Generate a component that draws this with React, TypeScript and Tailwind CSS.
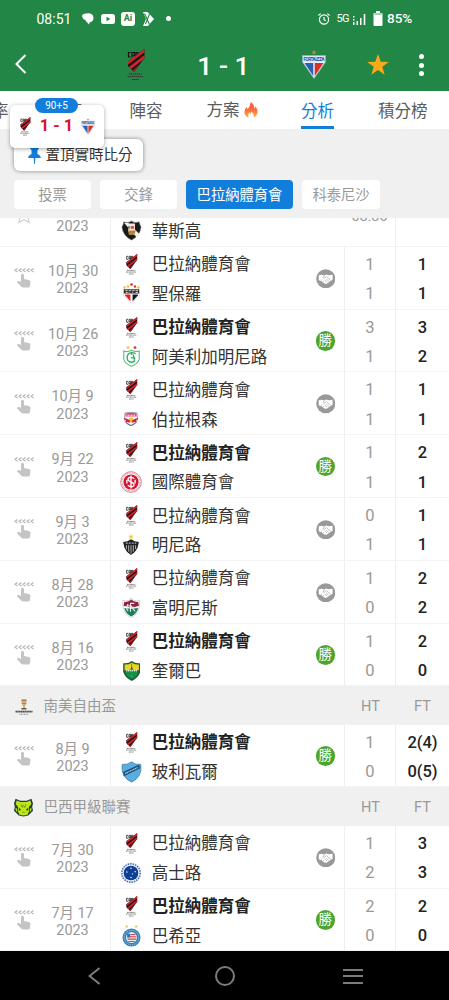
import type { ReactNode } from 'react';

type Result = 'win' | 'draw';

type Match = {
  day: string;
  opponent: string;
  crest: ReactNode;
  result: Result;
  ht: [string, string];
  ft: [string, string];
};

const CAP_NAME = '巴拉納體育會';

/* Crests */

function CapCrest({ className = '' }: { className?: string }) {
  return (
    <svg viewBox="0 0 36 64" className={className}>
      <path d="M8 7H4v9h4M11 17V7h5v10M11 13h5M19 17V7h4v5h-4" fill="none" stroke="#161616" strokeWidth="2.400" />
      <path d="M36 0v18L15 46 3 34v-9z" fill="#191616" />
      <path d="M36 0v6.500L3 31v-6z" fill="#d3222b" />
      <path d="M36 12v5.500l-3 4L9 40l-4-4z" fill="#d3222b" />
      <path d="M26 31l-4 6-7 9-3-3z" fill="#a81a22" />
      <path d="M5 50h25M2 55h31M11 61h14" stroke="#333" strokeWidth="2" strokeDasharray="3 1" />
    </svg>
  );
}

function FortalezaCrest({ className = '' }: { className?: string }) {
  return (
    <svg viewBox="0 0 48 58" className={className}>
      <path d="M24 0l1.300 3 3.200.3-2.400 2 .8 3.200-2.900-1.700-2.900 1.700.8-3.200-2.400-2 3.200-.3z" fill="#d48a35" />
      <path d="M1 11h46v13L24 57 1 24z" fill="#e9edf4" stroke="#8fabd2" strokeWidth="1.500" />
      <path d="M5 26h17.500v26z" fill="#2763b0" />
      <path d="M43 26H25.500v26z" fill="#d83027" />
      <rect x="2" y="12" width="44" height="12" fill="#dce7f4" />
      <text x="24" y="21.500" textAnchor="middle" fontSize="9" fontWeight="700" textLength="42" fill="#1f4f9c" fontFamily="Roboto, sans-serif">
        FORTALEZA
      </text>
    </svg>
  );
}

function VascoCrest() {
  return (
    <svg viewBox="0 0 24 24" className="h-[23px] w-[21px]">
      <path d="M3 2q5 2 9-1 4 3 9 1 0 3 2 6-1 10-11 15Q2 18 1 8q2-3 2-6z" fill="#1a1a1a" stroke="#999" strokeWidth=".6" />
      <path d="M3.500 3l5 .3L21 16l-3 4z" fill="#f1f1f1" />
      <path d="M9 4h7v9l-3 3-5-3z" fill="#ece7df" />
      <path d="M11 7h4v3h-4z" fill="#d1553c" />
      <path d="M8 12l9 0-2 5H9z" fill="#b4843f" />
      <path d="M13 4l1-2 1 2zM8 7h2v3H8z" fill="#777" />
    </svg>
  );
}

function SaoPauloCrest() {
  return (
    <svg viewBox="0 0 24 30" className="h-[21px] w-[17px]">
      <circle cx="2" cy="6.500" r="1.700" fill="#f2c230" />
      <circle cx="7" cy="5" r="1.700" fill="#f2c230" />
      <circle cx="12" cy="2.200" r="1.900" fill="#db2f35" />
      <circle cx="17" cy="5" r="1.700" fill="#db2f35" />
      <circle cx="22" cy="6.500" r="1.700" fill="#f2c230" />
      <path d="M1 9h22v9L12 29 1 18z" fill="#fff" stroke="#bbb" strokeWidth=".8" />
      <rect x="1" y="9" width="22" height="6" fill="#333" />
      <path d="M3 11h3.500M8 11h3.500M13 11h3.500M18 11h3.500M4 13.500h2.500M8 13.500h1M13 13.500h1M18 13.500h3" stroke="#eee" strokeWidth="1.200" />
      <path d="M3 16.500h7.500V26L3 18z" fill="#e01f26" />
      <path d="M21 16.500h-7.500V26l7.500-8z" fill="#151515" />
    </svg>
  );
}

function AmericaCrest() {
  return (
    <svg viewBox="0 0 24 30" className="h-[21px] w-[17px]">
      <circle cx="7" cy="2.200" r="2" fill="#f0cf32" />
      <circle cx="17" cy="2.200" r="2" fill="#df363a" />
      <path d="M1 7q5 2 11-1 6 3 11 1v12q-2 6-11 10Q3 25 1 19z" fill="#fff" stroke="#4fbb7a" strokeWidth="1.500" />
      <path d="M18 11q-6-3-10 0-4 4-1 10 4 4 9 1v-5h-5M12 9v4M14 12l3 7" fill="none" stroke="#2fae62" strokeWidth="1.900" />
    </svg>
  );
}

function BragantinoCrest() {
  return (
    <svg viewBox="0 0 30 28" className="h-[14px] w-[16px]">
      <path d="M3 2q12-3 24 0l1 14q-4 9-13 12Q6 25 2 16z" fill="#fff" stroke="#8490aa" strokeWidth="1.800" />
      <path d="M4 3q11-3 22 0v6H4z" fill="#df4c70" />
      <path d="M6 6.500h18" stroke="#fff" strokeWidth="2" strokeDasharray="2 1" />
      <circle cx="15" cy="16" r="5" fill="#f5bf25" />
      <path d="M0 12l6 1 7 4-1 5-4-2-4 2 1-5zM30 12l-6 1-7 4 1 5 4-2 4 2-1-5z" fill="#d7213a" />
      <path d="M6 22l9 5 9-5" fill="none" stroke="#56658a" strokeWidth="2" />
    </svg>
  );
}

function InternacionalCrest() {
  return (
    <svg viewBox="0 0 24 24" className="h-[22px] w-[22px]">
      <circle cx="12" cy="12" r="11.300" fill="#fff" stroke="#d35b68" strokeWidth=".8" />
      <circle cx="12" cy="12" r="9.800" fill="none" stroke="#d97c86" strokeWidth="1.100" strokeDasharray="1 .8" />
      <circle cx="12" cy="12" r="8.300" fill="#d31631" />
      <path d="M15.500 8.500Q12 5.500 9 8q-1 2.500 3 4t3 4q-3 2.500-6.500-.5M12 5v14M7.500 9.500v4M16.500 9.500v4" fill="none" stroke="#fff" strokeWidth="1.500" />
    </svg>
  );
}

function AtleticoCrest() {
  return (
    <svg viewBox="0 0 24 32" className="h-[21px] w-[16px]">
      <path d="M12 0l1 2.500h3l-2 2 .6 3-2.600-1.500-2.600 1.500.6-3-2-2h3z" fill="#efd22c" />
      <path d="M0 12q7 0 12-4 5 4 12 4l-2 9q-3 7-10 11Q5 28 2 21z" fill="#202020" />
      <path d="M5 17v6M8.500 17v10M12 17v13M15.500 17v10M19 17v6" stroke="#ddd" strokeWidth="1.200" />
      <path d="M4 14h16" stroke="#aaa" strokeWidth="2" strokeDasharray="3 1.500" />
    </svg>
  );
}

function FluminenseCrest() {
  return (
    <svg viewBox="0 0 24 26" className="h-[20px] w-[18.500px]">
      <path d="M1 3q4 2 8 0l3-3 3 3q4 2 8 0 1 17-11 23Q0 20 1 3z" fill="#fff" stroke="#a9aaa8" strokeWidth=".7" />
      <path d="M3 5q5 1 9-3 4 4 9 3l1 5-9 3-11-3z" fill="#8d2442" />
      <path d="M3 13l9 1 9-1q-2 8-9 11-7-3-9-11z" fill="#178059" />
      <path d="M16 7h-5v11M11 12h5M8 8q-4 5 0 9M6 10.500h6l5 7" fill="none" stroke="#eee" strokeWidth="1.400" />
    </svg>
  );
}

function CuiabaCrest() {
  return (
    <svg viewBox="0 0 24 28" className="h-[20px] w-[17.500px]">
      <path d="M12 0q5 4 12 3v12q-2 8-12 13Q2 23 0 15V3q7 1 12-3z" fill="#1e5b35" />
      <path d="M12 2.500q5 3 10 2.500v8H2V5q5 .5 10-2.500z" fill="#f0d31b" />
      <path d="M11.500 4h1v4l2 5h-5l2-5z" fill="#227844" />
      <path d="M2.500 15h19q-2 7-9.500 10.500Q4.500 22 2.500 15z" fill="#128f48" />
      <path d="M4 13.500h16" stroke="#d9e6cd" strokeWidth="2.200" strokeDasharray="2 .7" />
      <circle cx="12" cy="21" r="1.800" fill="#38995d" />
    </svg>
  );
}

function BolivarCrest() {
  return (
    <svg viewBox="0 0 24 26" className="h-[22px] w-[21px]">
      <path d="M1 4q6 1 11-3 5 4 11 3 2 15-11 21Q-1 19 1 4z" fill="#58aee1" stroke="#397faa" strokeWidth=".9" />
      <path d="M2 13L21 4l1 5L3 18z" fill="#1c527c" />
      <path d="M4.500 14.800L20 7.500" stroke="#a5cbe2" strokeWidth="1.600" strokeDasharray="1.500 .6" />
    </svg>
  );
}

function CruzeiroCrest() {
  return (
    <svg viewBox="0 0 24 24" className="h-[22px] w-[22px]">
      <circle cx="12" cy="12" r="11.500" fill="#e9eef7" />
      <circle cx="12" cy="12" r="10" fill="none" stroke="#4f72ae" strokeWidth="1.700" strokeDasharray="1.600 1.100" />
      <circle cx="12" cy="12" r="8" fill="#0e3f93" />
      <g fill="#fff">
        <circle cx="12" cy="6.700" r=".8" />
        <circle cx="7.500" cy="11" r=".8" />
        <circle cx="16.500" cy="10.500" r=".8" />
        <circle cx="13.500" cy="13" r=".6" />
        <circle cx="12" cy="17" r=".8" />
      </g>
    </svg>
  );
}

function BahiaCrest() {
  return (
    <svg viewBox="0 0 24 28" className="h-[22px] w-[19px]">
      <circle cx="6" cy="2" r="1.600" fill="#efcf56" />
      <circle cx="18" cy="2" r="1.600" fill="#efcf56" />
      <circle cx="12" cy="16" r="11.500" fill="#3780b8" />
      <circle cx="12" cy="16" r="9.300" fill="none" stroke="#a3cbe2" strokeWidth="1.200" strokeDasharray="1.500 1" />
      <circle cx="12" cy="16" r="7" fill="#e3edf3" />
      <path d="M11 12h6M10 15h8M7 18h11M8 21h8" stroke="#d44747" strokeWidth="1.400" />
      <path d="M6.500 11h4v5h-4z" fill="#396fa9" />
    </svg>
  );
}

function LibertadoresLogo() {
  return (
    <svg viewBox="0 0 36 32" className="h-[16px] w-[18px]">
      <path d="M13 0h10v9l-3 5v4h-4v-4l-3-5z" fill="#d1b07f" />
      <path d="M13 3h10M14 9h8" stroke="#98744a" strokeWidth="1.500" />
      <path d="M13 18h10v3H13z" fill="#60574c" />
      <path d="M1 25h34" stroke="#4a4743" strokeWidth="3.500" strokeDasharray="3 .6" />
      <path d="M9 30.500h18" stroke="#8c8780" strokeWidth="2" strokeDasharray="2 1" />
    </svg>
  );
}

function BrasileiraoLogo() {
  return (
    <svg viewBox="0 0 24 24" className="h-[19px] w-[19px]">
      <path d="M2 1l6 2.500h8L22 1l2 6-1 4 1 5-6 6-6 1.500L6 22l-6-6 1-5-1-4z" fill="#20403a" />
      <path d="M3.500 3L8 5h8l4.500-2L22 7.500l-3 3.500 0 6-2 4-5 1-5-1-2-4V11L2 7.500z" fill="#bfe51a" />
      <path d="M2 12l2 2v4l-2-3zM22 12l-2 2v4l2-3z" fill="#bfe51a" />
      <path d="M6 12l3 3-3 1zM18 12l-3 3 3 1z" fill="#20403a" />
      <path d="M9 8l1.500 4L12 9l1.500 3L15 8M10.500 18h3" fill="none" stroke="#5f9c1c" strokeWidth="1.100" />
    </svg>
  );
}

/* Small icons */

function SwipeHint() {
  return (
    <svg viewBox="0 0 22 22" className="h-[22px] w-[22px]">
      <path
        d="M4.500 1.500L2 3.300l2.500 1.800M8.500 1.500L6 3.300l2.500 1.800M12.500 1.500L10 3.300l2.500 1.800M16.500 1.500L14 3.300l2.500 1.800M20.500 1.500L18 3.300l2.500 1.800"
        fill="none"
        stroke="#b5b5b5"
        strokeWidth="1.200"
      />
      <path
        d="M8 8.200q0-1.500 1.500-1.500T11 8.200v3.900l4.800.8q1.800.4 1.700 2.200l-.6 3.900q-.2 1.500-1.700 1.500H10q-1 0-1.600-.8L4 15.200q.4-1.500 2-1.100l2 1z"
        fill="#c4c4c4"
      />
    </svg>
  );
}

function ResultBadge({ result }: { result: Result }) {
  if (result === 'win') {
    return (
      <span className="mt-px flex h-[19.500px] w-[19.500px] items-center justify-center rounded-full bg-[#4ca52e] text-[13.500px] leading-none text-white">
        勝
      </span>
    );
  }
  return (
    <svg viewBox="0 0 20 20" className="mt-px h-[19.500px] w-[19.500px]">
      <circle cx="10" cy="10" r="9.800" fill="#999" />
      <path d="M2.800 6.500l3-.7 2.700.8 2-.9 2.500.6 4-.5v5.300l-2.500 1.400-3.500 2.600-2 .1-3.500-2.600-2.700-1z" fill="#fff" />
      <path d="M8.500 6.700L7.200 9l1.500.4 2-1.600 4.300 3.800M10.500 10.200l2.700 2.300M9 11.400l2.500 2M5 12l1.500-1.300M7 13.500l1.300-1.400" fill="none" stroke="#999" strokeWidth=".6" />
    </svg>
  );
}

function Flame() {
  return (
    <svg viewBox="0 0 14 17" className="h-[16px] w-[14px]">
      <path d="M6.500 0Q11 3 10.500 7q1-.8 1-2.200Q14 7 14 10.500 13.500 15 9.500 16.500q1.500-3-2-6.500-.3 2-1.300 2.500-.7-.7-.8-1.500-2.200 2.500-1 5.500Q0 15 0 10.500 0 7.500 2.500 5q0 1.500 1 2.500Q6.800 4 6.500 0z" fill="url(#flame)" />
      <defs>
        <linearGradient id="flame" x1="0" y1="0" x2="0" y2="1">
          <stop offset="0" stopColor="#f4513f" />
          <stop offset=".55" stopColor="#f9743f" />
          <stop offset="1" stopColor="#fbb244" />
        </linearGradient>
      </defs>
    </svg>
  );
}

/* Screen sections */

function StatusBar() {
  return (
    <div className="flex h-[37px] items-center pl-[36.500px] pr-[37px] text-white">
      <span className="w-[34px] whitespace-nowrap pt-px text-[14px] leading-none">08:51</span>
      <svg viewBox="0 0 12 12" className="ml-[11px] h-[12px] w-[12px]" fill="currentColor">
        <path d="M0 2.500Q1.500.3 6 .3 11.500.5 11.500 5q0 3.500-3.500 4.300L6.500 11.500 5.300 9.400Q3.500 8.500 3.500 7 .5 6.500 0 2.500z" />
      </svg>
      <svg viewBox="0 0 14 10" className="ml-[7px] h-[10px] w-[14px]">
        <rect width="14" height="10" rx="2.500" fill="#fff" />
        <path d="M5.500 2.700L9.300 5 5.500 7.300z" fill="#228646" />
      </svg>
      <span className="ml-[6.500px] flex h-[14px] w-[14px] items-center justify-center rounded-[3px] bg-white text-[9px] font-bold leading-none text-[#228646]">
        Ai
      </span>
      <svg viewBox="0 0 11 14" className="ml-[8px] h-[14px] w-[11px]">
        <path d="M0 0h4.500L7 2.500 11 7l-4 4.500L5 14H0l3-7z" fill="#fff" />
        <path d="M1.500 1.500l5 11M6.500 2L2.500 12" stroke="#228646" strokeWidth="1.100" />
      </svg>
      <span className="ml-[12px] h-[5px] w-[5px] rounded-full bg-white" />

      <svg viewBox="0 0 12 12" className="ml-auto h-[12px] w-[12px]" fill="none" stroke="#fff" strokeWidth="1.200">
        <circle cx="6" cy="6.500" r="4.600" />
        <path d="M6 4v2.700l1.800 1M.3 2.500L2.700.6M11.700 2.500L9.300.6" />
      </svg>
      <span className="ml-[6.500px] w-[13px] text-[11px] leading-none tracking-[-0.700px]">5G</span>
      <svg viewBox="0 0 14 12" className="ml-[2.500px] h-[12px] w-[14px]" fill="#fff">
        <path d="M1 3h1.500v1.500H1zM1 6h1.500v1.500H1zM1 9h1.500v3H1zM4.500 8H6v4H4.500zM8 5h1.500v7H8zM11.700 1h1.600v11h-1.600z" />
      </svg>
      <svg viewBox="0 0 10 15" className="ml-[7px] h-[15px] w-[10px]" fill="#fff">
        <path d="M3 0h4v2h1.500Q9.500 2 9.500 3v11q0 1-1 1h-7q-1 0-1-1V3q0-1 1-1H3z" />
        <path d="M1.500 3h7" stroke="#228646" strokeWidth=".8" />
      </svg>
      <span className="ml-[4px] w-[25px] whitespace-nowrap pt-px text-[13.500px] font-medium leading-none">85%</span>
    </div>
  );
}

function ScoreHeader() {
  return (
    <div className="flex h-[54px] items-center pl-[15px] pr-[24px] text-white">
      <svg viewBox="0 0 12 20" className="h-[20px] w-[12px]" fill="none" stroke="currentColor" strokeWidth="2">
        <path d="M10.500 1L1.500 10l9 9" />
      </svg>
      <CapCrest className="ml-[98.500px] mt-[2px] h-[32px] w-[19px]" />
      <span className="ml-[50px] mt-[4px] w-[58px] whitespace-nowrap text-center text-[26.500px] font-medium leading-none">
        1 - 1
      </span>
      <FortalezaCrest className="ml-[49.500px] h-[29px] w-[24px]" />
      <svg viewBox="0 0 22 22" className="ml-[41px] mt-[2px] h-[22px] w-[22px]" fill="#fba919">
        <path d="M11 0l2.700 7.700 8.100.2-6.500 4.900 2.400 7.900L11 16.100l-6.700 4.600 2.400-7.900L.2 7.900l8.100-.2z" />
      </svg>
      <span className="ml-auto mr-[1px] mt-[2px] flex flex-col gap-[3.500px]">
        <i className="h-[5px] w-[5px] rounded-full bg-white" />
        <i className="h-[5px] w-[5px] rounded-full bg-white" />
        <i className="h-[5px] w-[5px] rounded-full bg-white" />
      </span>
    </div>
  );
}

function TabBar() {
  return (
    <div className="h-[38px] overflow-hidden bg-white">
      <nav className="-ml-[24.500px] flex h-full gap-[44px] whitespace-nowrap text-[16.500px] leading-[41px] text-[#5c5c5c]">
        <span>賠率</span>
        <span className="w-[33px] text-[15px]">情報</span>
        <span>陣容</span>
        <span className="flex items-center gap-[4px]">
          方案 <Flame />
        </span>
        <span className="-ml-[0.500px] h-[38px] border-b-[3px] border-[#117edb] text-[#117edb]">分析</span>
        <span>積分榜</span>
      </nav>
    </div>
  );
}

function FilterChips() {
  return (
    <div className="flex h-[89px] items-end gap-[9px] bg-[#f0f0f0] pb-[9px] pl-[14px] text-[14.300px] leading-[31px] text-[#999]">
      <span className="h-[29px] w-[77px] rounded-[4px] bg-white text-center">投票</span>
      <span className="h-[29px] w-[77px] rounded-[4px] bg-white text-center">交鋒</span>
      <span className="h-[29px] w-[107px] rounded-[4px] bg-[#117edb] text-center text-white">{CAP_NAME}</span>
      <span className="h-[29px] w-[78px] rounded-[4px] bg-white text-center">科泰尼沙</span>
    </div>
  );
}

function FloatingScore() {
  return (
    <>
      <div className="absolute left-[14px] top-[138.500px] flex h-[32px] w-[129px] items-center rounded-[6px] bg-white pl-[13.500px] shadow-[0_0_4px_rgba(0,0,0,0.45)]">
        <svg viewBox="0 0 13 18" className="h-[18px] w-[13px]" fill="#117edb">
          <path d="M2 0h9v2.500L9.500 4v4q3 1 3.500 4H7.300L7 18h-.8l-.5-6H0q.5-3 3.500-4V4L2 2.500z" />
        </svg>
        <span className="ml-[5px] whitespace-nowrap pt-[3px] text-[14.500px] text-[#333]">置頂實時比分</span>
      </div>
      <div className="absolute left-[9.500px] top-[105px] flex h-[43px] w-[94px] items-center justify-between rounded-[5px] bg-white px-[7px] shadow-[0_1px_4px_rgba(0,0,0,0.35)]">
        <CapCrest className="ml-[2px] h-[19px] w-[12px]" />
        <span className="-mr-[1px] whitespace-nowrap text-[16.500px] font-bold leading-none text-[#d8122f]">1 - 1</span>
        <FortalezaCrest className="mr-px h-[17px] w-[14px]" />
      </div>
      <span className="absolute left-[35px] top-[97.500px] h-[15px] w-[43px] rounded-full bg-[#117edb] text-center text-[10px] leading-[15px] text-white">
        90+5
      </span>
    </>
  );
}

function MatchRow({ match }: { match: Match }) {
  const won = match.result === 'win';
  return (
    <div className="grid h-[62.800px] grid-cols-[48px_63px_234px_51px_53px] border-b border-[#f3f3f3]">
      <div className="flex items-center justify-center pb-[1px] pt-[2px]">
        <SwipeHint />
      </div>
      <div className="flex flex-col justify-center border-r border-[#eeeeee] pr-[13px] pt-[5px] text-center text-[14.400px] leading-[17.500px] text-[#999]">
        <span className="whitespace-nowrap">{match.day}</span>
        <span>2023</span>
      </div>
      <div className="flex items-center border-r border-[#eeeeee] pr-[9px]">
        <div className="flex flex-1 flex-col pt-[2.500px]">
          <div className="flex h-[29.500px] items-center">
            <span className="flex w-[40.800px] justify-center">
              <CapCrest className="h-[21px] w-[12.500px]" />
            </span>
            <span className={won ? 'pt-[3px] text-[16.500px] font-bold text-[#222]' : 'pt-[3px] text-[16.500px] text-[#333]'}>
              {CAP_NAME}
            </span>
          </div>
          <div className="flex h-[29.500px] items-center">
            <span className="flex w-[40.800px] justify-center">{match.crest}</span>
            <span className="pt-[3px] text-[16.500px] text-[#333]">{match.opponent}</span>
          </div>
        </div>
        <ResultBadge result={match.result} />
      </div>
      <ScorePair values={match.ht} className="border-r border-[#eeeeee] text-[#999]" />
      <ScorePair values={match.ft} className="font-medium text-[#222]" />
    </div>
  );
}

function ScorePair({ values, className }: { values: [string, string]; className: string }) {
  return (
    <div className={`flex flex-col pt-[3px] text-center text-[16.500px] leading-[29.500px] ${className}`}>
      <span>{values[0]}</span>
      <span>{values[1]}</span>
    </div>
  );
}

function LeagueHeader({ logo, name }: { logo: ReactNode; name: string }) {
  return (
    <div className="grid h-[38.300px] grid-cols-[43.500px_301.500px_51px_53px] items-center bg-[#f0f0f0] pt-[3px] text-[14.500px] text-[#999]">
      <span className="flex justify-center pb-px pl-[4px]">{logo}</span>
      <span>{name}</span>
      <span className="text-center">HT</span>
      <span className="text-center">FT</span>
    </div>
  );
}

/* The last row of the previous block, scrolled under the filter chips */
function ScrolledRow() {
  return (
    <div className="flex h-[28.800px] items-end overflow-hidden border-b border-[#f3f3f3]">
      <div className="grid h-[62px] w-full shrink-0 grid-cols-[48px_63px_285px_53px]">
        <div className="flex justify-center pt-[22px]">
          <svg viewBox="0 0 24 24" className="h-[18px] w-[18px]" fill="none" stroke="#cfcfcf" strokeWidth="1.500">
            <path d="M12 1l3.100 7.500 8 .6-6.100 5.200 1.900 7.900L12 18l-6.900 4.200L7 14.300.9 9.100l8-.6z" />
          </svg>
        </div>
        <div className="flex flex-col justify-center border-r border-[#eeeeee] pr-[13px] pt-[6px] text-center text-[14.400px] leading-[17.500px] text-[#999]">
          <span>11月 2</span>
          <span>2023</span>
        </div>
        <div className="flex items-end border-r border-[#eeeeee]">
          <span className="flex w-[40.800px] justify-center pb-[4px]">
            <VascoCrest />
          </span>
          <span className="flex-1 pb-[1px] text-[16.500px] text-[#333]">華斯高</span>
          <span className="w-[51px] self-center pt-[5px] text-center text-[14.500px] leading-none text-[#999]">08:30</span>
        </div>
      </div>
    </div>
  );
}

function SystemNav() {
  return (
    <div className="flex flex-1 items-center bg-black pl-[88px]">
      <svg viewBox="0 0 12 18" className="h-[18px] w-[12px]" fill="none" stroke="#7c7c7c" strokeWidth="2">
        <path d="M11.500 1L1.500 9l10 8" />
      </svg>
      <span className="ml-[115px] h-[20px] w-[20px] rounded-full border-2 border-[#7c7c7c]" />
      <span className="ml-[108px] mt-px flex flex-col gap-[4.500px]">
        <i className="h-[2px] w-[20px] bg-[#7c7c7c]" />
        <i className="h-[2px] w-[20px] bg-[#7c7c7c]" />
        <i className="h-[2px] w-[20px] bg-[#7c7c7c]" />
      </span>
    </div>
  );
}

const brasileirao: Match[] = [
  { day: '10月 30', opponent: '聖保羅', crest: <SaoPauloCrest />, result: 'draw', ht: ['1', '1'], ft: ['1', '1'] },
  { day: '10月 26', opponent: '阿美利加明尼路', crest: <AmericaCrest />, result: 'win', ht: ['3', '1'], ft: ['3', '2'] },
  { day: '10月 9', opponent: '伯拉根森', crest: <BragantinoCrest />, result: 'draw', ht: ['1', '1'], ft: ['1', '1'] },
  { day: '9月 22', opponent: '國際體育會', crest: <InternacionalCrest />, result: 'win', ht: ['1', '1'], ft: ['2', '1'] },
  { day: '9月 3', opponent: '明尼路', crest: <AtleticoCrest />, result: 'draw', ht: ['0', '1'], ft: ['1', '1'] },
  { day: '8月 28', opponent: '富明尼斯', crest: <FluminenseCrest />, result: 'draw', ht: ['1', '0'], ft: ['2', '2'] },
  { day: '8月 16', opponent: '奎爾巴', crest: <CuiabaCrest />, result: 'win', ht: ['1', '0'], ft: ['2', '0'] },
];

const libertadores: Match[] = [
  { day: '8月 9', opponent: '玻利瓦爾', crest: <BolivarCrest />, result: 'win', ht: ['1', '0'], ft: ['2(4)', '0(5)'] },
];

const earlier: Match[] = [
  { day: '7月 30', opponent: '高士路', crest: <CruzeiroCrest />, result: 'draw', ht: ['1', '2'], ft: ['3', '3'] },
  { day: '7月 17', opponent: '巴希亞', crest: <BahiaCrest />, result: 'win', ht: ['2', '0'], ft: ['2', '0'] },
];

export default function App() {
  return (
    <div className="relative flex h-[1000px] w-[449px] flex-col overflow-hidden bg-white font-[Roboto,'Noto_Sans_CJK_TC',sans-serif]">
      <header className="bg-[#228646]">
        <StatusBar />
        <ScoreHeader />
      </header>
      <TabBar />
      <FilterChips />
      <main className="shrink-0 bg-white">
        <ScrolledRow />
        {brasileirao.map((m) => (
          <MatchRow key={m.day} match={m} />
        ))}
        <LeagueHeader logo={<LibertadoresLogo />} name="南美自由盃" />
        {libertadores.map((m) => (
          <MatchRow key={m.day} match={m} />
        ))}
        <LeagueHeader logo={<BrasileiraoLogo />} name="巴西甲級聯賽" />
        {earlier.map((m) => (
          <MatchRow key={m.day} match={m} />
        ))}
      </main>
      <SystemNav />
      <FloatingScore />
    </div>
  );
}
